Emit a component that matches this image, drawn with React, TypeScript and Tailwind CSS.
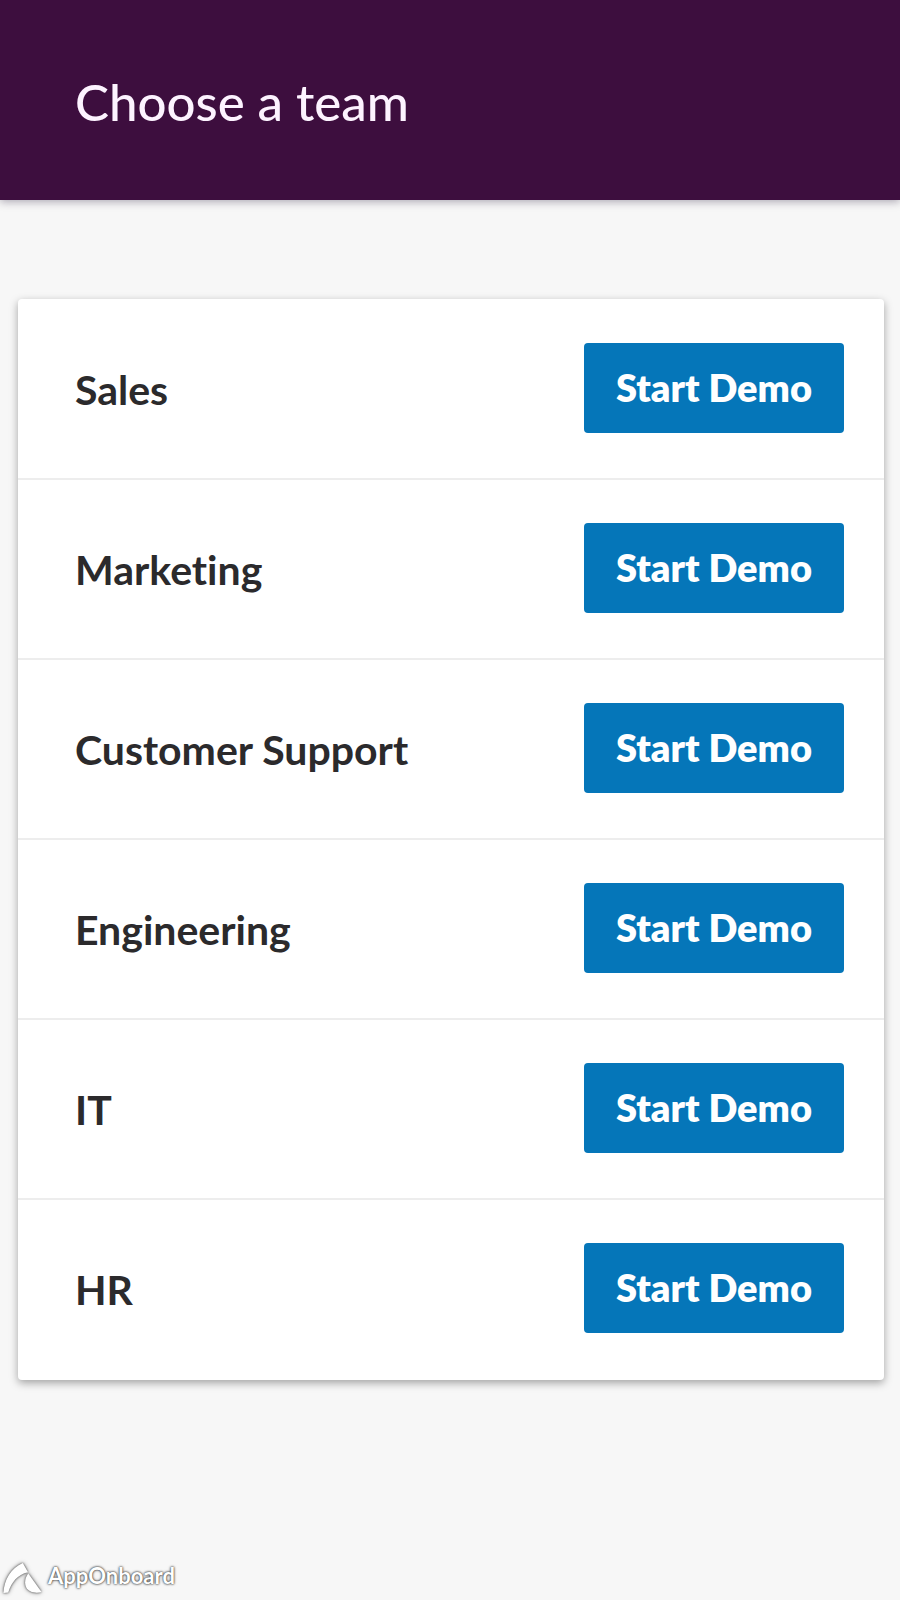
interface Team {
  id: string;
  name: string;
}

const teams: Team[] = [
  { id: 'sales', name: 'Sales' },
  { id: 'marketing', name: 'Marketing' },
  { id: 'customer-support', name: 'Customer Support' },
  { id: 'engineering', name: 'Engineering' },
  { id: 'it', name: 'IT' },
  { id: 'hr', name: 'HR' },
];

function TeamRow({ team }: { team: Team }) {
  return (
    <li className="flex items-center justify-between border-b-2 border-[#ededed] pt-[43px] pr-10 pb-[45px] pl-[57px] last:border-transparent">
      <h2
        id={`team-${team.id}`}
        className="pt-1 text-[41px] leading-12 font-bold text-[#2b2a2c] [font-variant-ligatures:none]"
      >
        {team.name}
      </h2>
      <button
        type="button"
        aria-describedby={`team-${team.id}`}
        className="rounded-sm bg-[#0576b9] px-8 pt-5 pb-5.5 text-[38px] leading-12 font-extrabold text-white"
      >
        Start Demo
      </button>
    </li>
  );
}

function Brand() {
  return (
    <div className="flex items-start gap-1 text-white">
      <svg
        viewBox="0 0 44 38"
        className="h-[38px] w-11 [filter:drop-shadow(0_0_1px_rgba(0,0,0,0.6))_drop-shadow(0_0_2px_rgba(0,0,0,0.4))]"
        fill="currentColor"
        aria-hidden="true"
      >
        <path d="M3.500 31C4 18 11 6 22.800 1L28 10.200C17.500 12.500 11.500 20 8.200 30.600Z" />
        <path d="M28.300 11.600L41.500 30C36 31.600 28.500 30.500 26 25C24 20.500 25.500 15 28.300 11.600Z" />
      </svg>
      <span className="text-[22px] leading-7 font-bold [text-shadow:0_0_2px_rgba(0,0,0,0.8),0_0_3px_rgba(0,0,0,0.6)]">
        AppOnboard
      </span>
    </div>
  );
}

export default function App() {
  return (
    <div className="flex min-h-screen flex-col bg-[#f7f7f7] font-[Lato,'Liberation_Sans',sans-serif]">
      <header className="bg-[#3d0e3e] px-[75px] pt-[70px] pb-[66px] shadow-[0_2px_8px_rgba(40,30,60,0.35)]">
        <h1 className="text-[51px] leading-16 font-medium text-[#fdf3ff]">Choose a team</h1>
      </header>

      <main className="flex-1 pt-[99px] pr-4 pb-12 pl-4.5">
        <ul className="rounded-sm bg-white pt-px shadow-[0_3px_8px_rgba(0,0,0,0.35)]">
          {teams.map((team) => (
            <TeamRow key={team.id} team={team} />
          ))}
        </ul>
      </main>

      <footer>
        <Brand />
      </footer>
    </div>
  );
}
